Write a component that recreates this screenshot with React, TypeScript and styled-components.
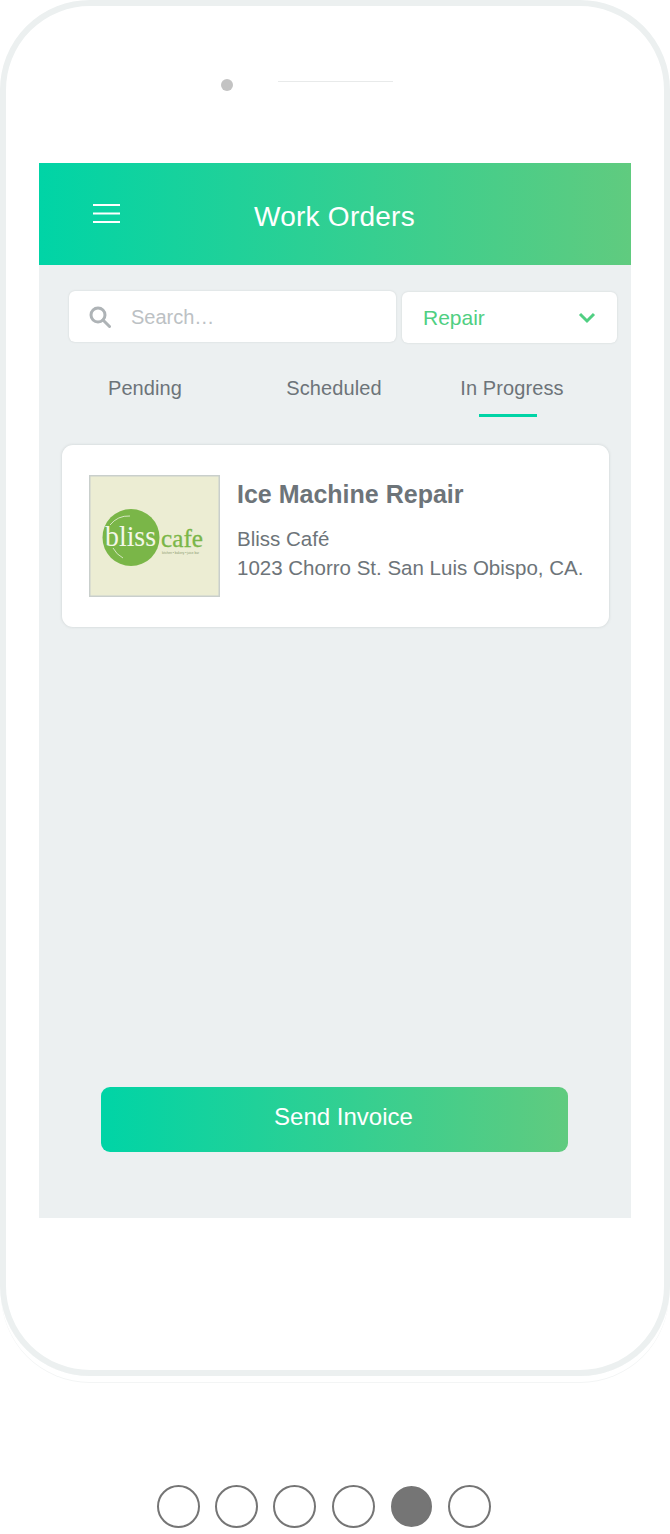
import React from 'react';
import styled, { createGlobalStyle } from 'styled-components';

const GlobalStyle = createGlobalStyle`
  html, body {
    margin: 0;
    padding: 0;
    background: #fff;
    font-family: 'Liberation Sans', Arial, sans-serif;
  }
  * { box-sizing: border-box; }
`;

const brandGradient = 'linear-gradient(90deg, #00d4a6 0%, #60cb7f 100%)';

const Page = styled.div`
  width: 670px;
  height: 1534px;
  overflow: hidden;
  background: #fff;
`;

const Phone = styled.div`
  width: 670px;
  height: 1376px;
  border: 6px solid #ecf0f0;
  border-radius: 90px;
  box-shadow: 0 7px 0 -1px #fff, 0 8px 0 -1px #f3f5f5;
  padding: 73px 33px 0;
`;

const Earpiece = styled.div`
  height: 84px;
  display: flex;
  align-items: flex-start;
  padding-left: 182px;
  gap: 45px;
`;

const Camera = styled.span`
  width: 12px;
  height: 12px;
  border-radius: 50%;
  background: #c3c3c3;
`;

const Speaker = styled.span`
  width: 115px;
  height: 1px;
  margin-top: 2px;
  background: #e8eaea;
`;

const Screen = styled.div`
  width: 592px;
  height: 1055px;
  background: #ecf0f1;
  display: flex;
  flex-direction: column;
`;

const Header = styled.header`
  height: 102px;
  flex: none;
  background: ${brandGradient};
  display: flex;
  align-items: center;
  padding-left: 54px;
`;

const MenuIcon = styled.svg`
  width: 27px;
  height: 20px;
  margin-top: -1px;
  flex: none;
`;

const Title = styled.h1`
  margin: 6px 0 0 134px;
  font-size: 28px;
  font-weight: 400;
  line-height: 32px;
  color: #fff;
  letter-spacing: 0.25px;
`;

const FilterRow = styled.div`
  display: flex;
  align-items: flex-start;
  gap: 6px;
  padding: 26px 0 0 30px;
`;

const SearchBox = styled.div`
  width: 327px;
  height: 51px;
  background: #fff;
  border-radius: 6px;
  box-shadow: 0 0 2px rgba(120, 130, 130, 0.28);
  display: flex;
  align-items: center;
  padding-left: 20px;
  gap: 20px;
  font-size: 20px;
  color: #bcc1c4;

  span {
    margin-top: 2px;
  }
`;

const SelectBox = styled.div`
  width: 215px;
  height: 51px;
  margin-top: 1px;
  background: #fff;
  border-radius: 6px;
  box-shadow: 0 0 2px rgba(120, 130, 130, 0.25);
  display: flex;
  align-items: center;
  justify-content: space-between;
  padding: 0 21px;
  font-size: 21px;
  color: #50cf82;
`;

const Tabs = styled.nav`
  display: grid;
  grid-template-columns: 178px 200px 156px;
  padding: 33px 0 0 17px;
`;

const Tab = styled.div<{ $active?: boolean }>`
  height: 41px;
  position: relative;
  text-align: center;
  font-size: 20px;
  line-height: 24px;
  letter-spacing: 0.1px;
  color: #6d7479;

  ${(p) =>
    p.$active &&
    `
    &::after {
      content: '';
      position: absolute;
      left: 45px;
      top: 38px;
      width: 58px;
      height: 3px;
      background: #00d4a6;
    }
  `}
`;

const Card = styled.article`
  width: 547px;
  height: 182px;
  margin: 28px 0 0 23px;
  background: #fff;
  border-radius: 11px;
  box-shadow: 0 0 3px rgba(120, 130, 130, 0.28);
  display: flex;
  padding: 30px 0 0 27px;
  gap: 17px;
`;

const Logo = styled.svg`
  width: 131px;
  height: 122px;
  flex: none;
`;

const CardBody = styled.div`
  display: flex;
  flex-direction: column;
  color: #6d7479;
`;

const CardTitle = styled.h2`
  margin: 4px 0 15px;
  font-size: 25px;
  line-height: 30px;
  font-weight: 700;
`;

const CardLine = styled.div`
  font-size: 20.5px;
  line-height: 29px;
  white-space: nowrap;
`;

const SendButton = styled.button`
  width: 467px;
  height: 65px;
  margin: 460px 0 0 62px;
  border: 0;
  border-radius: 9px;
  padding: 0 0 6px 18px;
  background: ${brandGradient};
  color: #fff;
  font-family: inherit;
  font-size: 24px;
`;

const Pager = styled.div`
  display: flex;
  align-items: flex-start;
  gap: 15.2px;
  padding: 109px 0 0 157px;
`;

const Dot = styled.span<{ $active?: boolean }>`
  width: ${(p) => (p.$active ? '41px' : '43px')};
  height: ${(p) => (p.$active ? '41px' : '43px')};
  margin: ${(p) => (p.$active ? '1px 1px 0 1.2px' : '0')};
  border-radius: 50%;
  border: 2px solid #757575;
  background: ${(p) => (p.$active ? '#757575' : '#fff')};
`;

export default function App() {
  return (
    <Page>
      <GlobalStyle />
      <Phone>
        <Earpiece>
          <Camera />
          <Speaker />
        </Earpiece>
        <Screen>
          <Header>
            <MenuIcon viewBox="0 0 27 20">
              <path d="M0 1h27M0 9.500h27M0 18h27" stroke="#fff" strokeWidth="2" fill="none" />
            </MenuIcon>
            <Title>Work Orders</Title>
          </Header>
          <FilterRow>
            <SearchBox>
              <svg width="22" height="22" viewBox="0 0 22 22" fill="none" stroke="#aeb3b6" strokeWidth="3">
                <circle cx="9" cy="9" r="7" />
                <path d="M14 14l6.500 6.500" strokeLinecap="round" />
              </svg>
              <span>Search…</span>
            </SearchBox>
            <SelectBox>
              <span>Repair</span>
              <svg width="18" height="12" viewBox="0 0 18 12" fill="none" stroke="#50cf82" strokeWidth="3">
                <path d="M2 2l7 7 7-7" />
              </svg>
            </SelectBox>
          </FilterRow>
          <Tabs>
            <Tab>Pending</Tab>
            <Tab>Scheduled</Tab>
            <Tab $active>In Progress</Tab>
          </Tabs>
          <Card>
            <Logo viewBox="0 0 131 122">
              <rect x="0.75" y="0.75" width="129.5" height="120.5" fill="#ecedd3" stroke="#c9cfcc" strokeWidth="1.5" />
              <circle cx="42" cy="62.5" r="28.5" fill="#7ab648" />
              <path d="M21 50a24 24 0 0 1 20-9" stroke="#d6e6c2" strokeWidth="1" fill="none" />
              <path d="M24 73a24 24 0 0 0 10 10" stroke="#d6e6c2" strokeWidth="1" fill="none" />
              <text x="16" y="71" fontFamily="'Liberation Serif', serif" fontSize="29" fill="#f4f7e8" textLength="51" lengthAdjust="spacingAndGlyphs">
                bliss
              </text>
              <text x="72" y="72" fontFamily="'Liberation Serif', serif" fontSize="26" fill="#7ab648" stroke="#7ab648" strokeWidth="0.3" textLength="42" lengthAdjust="spacingAndGlyphs">
                cafe
              </text>
              <text x="73" y="79" fontFamily="'Liberation Sans', sans-serif" fontSize="3.600" fill="#8a9a70" textLength="37" lengthAdjust="spacingAndGlyphs">
                kitchen • bakery • juice bar
              </text>
            </Logo>
            <CardBody>
              <CardTitle>Ice Machine Repair</CardTitle>
              <CardLine>Bliss Café</CardLine>
              <CardLine>1023 Chorro St. San Luis Obispo, CA.</CardLine>
            </CardBody>
          </Card>
          <SendButton>Send Invoice</SendButton>
        </Screen>
      </Phone>
      <Pager>
        <Dot />
        <Dot />
        <Dot />
        <Dot />
        <Dot $active />
        <Dot />
      </Pager>
    </Page>
  );
}
